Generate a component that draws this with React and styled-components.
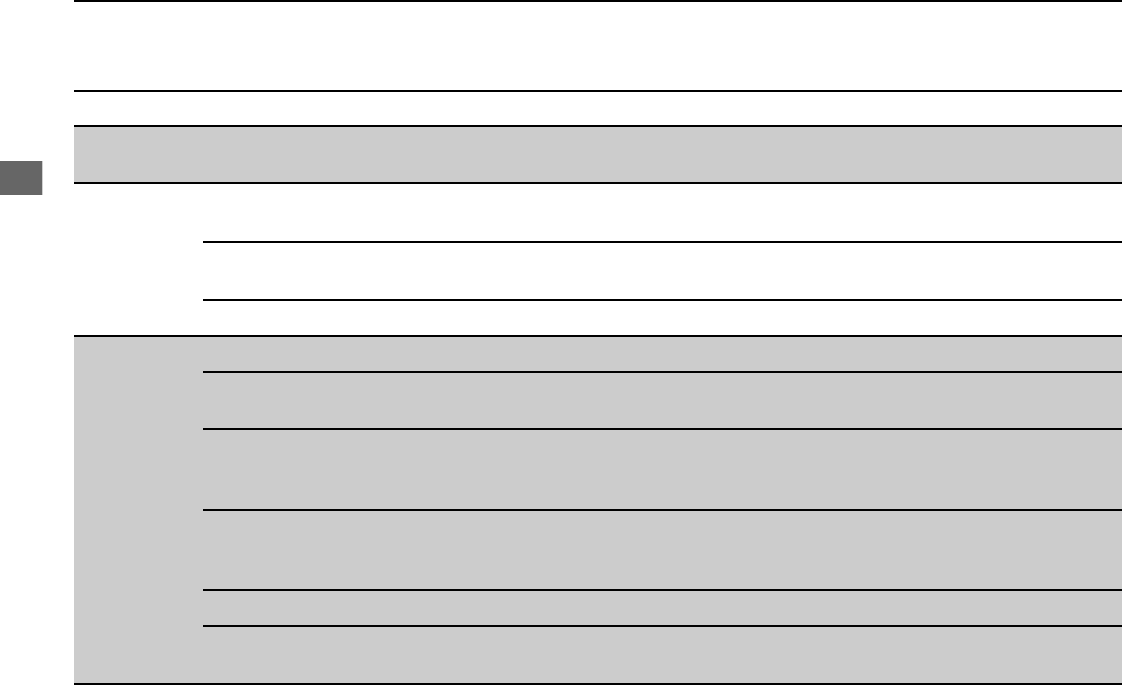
import React from 'react';
import styled, { createGlobalStyle } from 'styled-components';

const GlobalStyle = createGlobalStyle`
  html, body {
    margin: 0;
    padding: 0;
    background: #fff;
    font-family: "Liberation Sans", Arial, sans-serif;
  }
`;

const Page = styled.div`
  display: flex;
  width: 1123px;
  height: 685px;
  overflow: hidden;
`;

const Side = styled.div`
  width: 74px;
  flex-shrink: 0;
`;

const Tab = styled.div`
  margin-top: 161px;
  width: 42px;
  height: 34px;
  background: #666666;
  border-right: 1px solid #cfcfcf;
`;

const Table = styled.div`
  width: 1048px;
  display: flex;
  flex-direction: column;
  border-top: 2px solid #000;
`;

const Row = styled.div`
  height: ${(p) => p.h}px;
  background: ${(p) => (p.shaded ? '#cccccc' : '#fff')};
  border-bottom: 2px solid #000;
`;

const Group = styled.div`
  display: grid;
  grid-template-columns: 129px 1fr;
  background: ${(p) => (p.shaded ? '#cccccc' : '#fff')};
  border-bottom: 2px solid #000;
`;

const GroupHead = styled.div``;

const SubRows = styled.div`
  display: flex;
  flex-direction: column;
`;

const SubRow = styled.div`
  height: ${(p) => p.h}px;
  & + & {
    border-top: 2px solid #000;
  }
`;

const groups = [
  { shaded: false, rows: [57, 56, 34] },
  { shaded: true, rows: [34, 55, 79, 78, 34, 56] },
];

export default function App() {
  return (
    <>
      <GlobalStyle />
      <Page>
        <Side>
          <Tab />
        </Side>
        <Table>
          <Row h={88} />
          <Row h={34} />
          <Row h={55} shaded />
          {groups.map((g, i) => (
            <Group key={i} shaded={g.shaded}>
              <GroupHead />
              <SubRows>
                {g.rows.map((h, j) => (
                  <SubRow key={j} h={h} />
                ))}
              </SubRows>
            </Group>
          ))}
        </Table>
      </Page>
    </>
  );
}
